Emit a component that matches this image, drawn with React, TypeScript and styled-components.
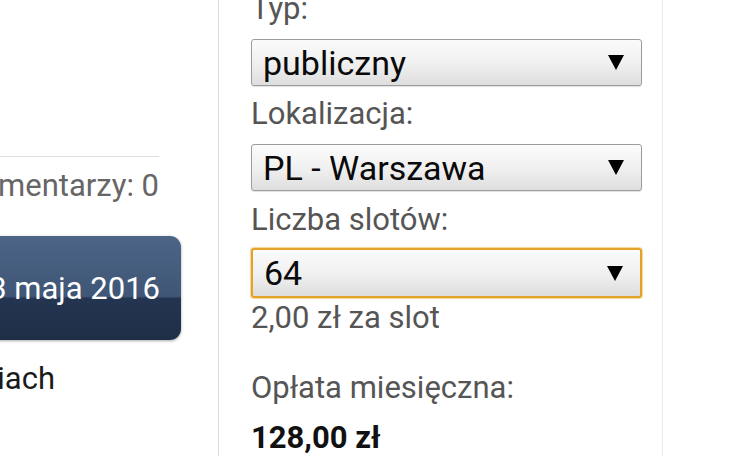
import React from "react";
import styled, { createGlobalStyle } from "styled-components";

const Global = createGlobalStyle`
  html, body { margin: 0; padding: 0; background: #fff; }
  body { font-family: Roboto, "Liberation Sans", Arial, sans-serif; }
`;

const Page = styled.div`
  display: flex;
  width: 730px;
  height: 456px;
  overflow: hidden;
  background: #fff;
`;

const LeftPane = styled.div`
  flex: 0 0 219px;
  display: flex;
  flex-direction: column;
  align-items: flex-end;
  overflow: hidden;
  padding: 156px 37px 0 0;
  box-sizing: border-box;
  border-right: 1px solid #dcdcdc;
`;

const Divider = styled.div`
  flex: none;
  width: 320px;
  height: 1px;
  background: #dedede;
  margin-right: 22px;
`;

const LeftText = styled.div<{ $gap: number; $right: number; $muted?: boolean }>`
  flex: none;
  white-space: nowrap;
  font-size: 31px;
  line-height: 36px;
  margin-top: ${(p) => p.$gap}px;
  margin-right: ${(p) => p.$right}px;
  color: ${(p) => (p.$muted ? "#666" : "#1a1a1a")};
`;

const DateButton = styled.div`
  flex: none;
  width: 340px;
  height: 104px;
  margin-top: 32px;
  box-sizing: border-box;
  border-radius: 11px;
  display: flex;
  align-items: center;
  justify-content: flex-end;
  padding-right: 21px;
  color: #fff;
  font-size: 31px;
  white-space: nowrap;
  background: linear-gradient(
    to bottom,
    #4c6486 0%,
    #3f5676 58%,
    #243551 60%,
    #1f2e47 100%
  );
  box-shadow: 0 1px 3px rgba(0, 0, 0, 0.35);
`;

const RightPane = styled.div`
  flex: 0 0 444px;
  box-sizing: border-box;
  padding: 0 20px 0 32px;
  border-right: 1px solid #ebebeb;
  display: flex;
  flex-direction: column;
`;

const Label = styled.div<{ $gap: number }>`
  font-size: 31px;
  line-height: 36px;
  color: #555;
  margin-top: ${(p) => p.$gap}px;
  white-space: nowrap;
`;

const Hint = styled(Label)`
  color: #555;
`;

const Amount = styled.div`
  font-size: 31px;
  line-height: 36px;
  font-weight: 700;
  color: #111;
  margin-top: 14px;
`;

const SelectBox = styled.div<{ $focused?: boolean }>`
  height: ${(p) => (p.$focused ? 50 : 47)}px;
  margin-top: ${(p) => (p.$focused ? 10 : 12)}px;
  box-sizing: border-box;
  border: ${(p) => (p.$focused ? "2px solid #e3a228" : "1px solid #9c9c9c")};
  box-shadow: ${(p) =>
    p.$focused ? "0 0 1px 1px rgba(240, 190, 80, 0.6)" : "0 1px 1px rgba(0,0,0,0.12)"};
  border-radius: 3px;
  background: linear-gradient(to bottom, #fbfbfb 0%, #efefef 55%, #dedede 100%);
  display: flex;
  align-items: center;
  justify-content: space-between;
  padding: 0 17px 0 11px;
  font-size: 34px;
  color: #0a0a0a;
`;

const Arrow = styled.svg`
  width: 16px;
  height: 15px;
  flex: none;
`;

const Select = ({ value, focused }: { value: string; focused?: boolean }) => (
  <SelectBox $focused={focused}>
    <span>{value}</span>
    <Arrow viewBox="0 0 16 15">
      <polygon points="0,0 16,0 8,15" fill="#000" />
    </Arrow>
  </SelectBox>
);

const Filler = styled.div`
  flex: 1;
`;

export default function App() {
  return (
    <>
      <Global />
      <Page>
        <LeftPane>
          <Divider />
          <LeftText $gap={11} $right={22} $muted>
            Komentarzy: 0
          </LeftText>
          <DateButton>23 maja 2016</DateButton>
          <LeftText $gap={21} $right={126}>
            w ustawieniach
          </LeftText>
        </LeftPane>
        <RightPane>
          <Label $gap={-9}>Typ:</Label>
          <Select value="publiczny" />
          <Label $gap={10}>Lokalizacja:</Label>
          <Select value="PL - Warszawa" />
          <Label $gap={11}>Liczba slotów:</Label>
          <Select value="64" focused />
          <Hint $gap={2}>2,00 zł za slot</Hint>
          <Label $gap={34}>Opłata miesięczna:</Label>
          <Amount>128,00 zł</Amount>
        </RightPane>
        <Filler />
      </Page>
    </>
  );
}
